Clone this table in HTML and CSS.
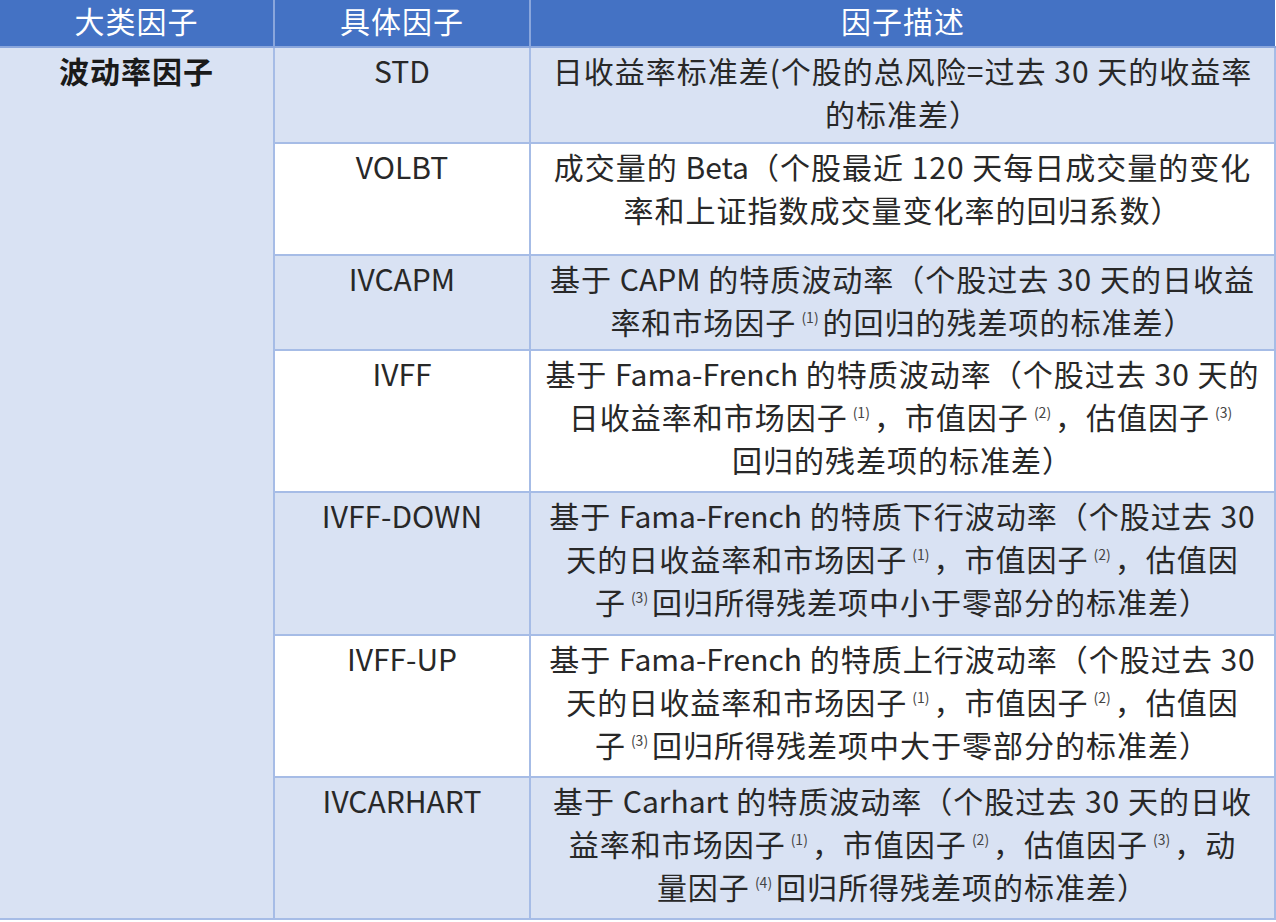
FILE: index.html
```html
<!DOCTYPE html>
<html lang="zh-CN">
<head>
<meta charset="utf-8">
<title>波动率因子</title>
<link rel="stylesheet" href="styles.css">
</head>
<body>
<table class="factors">
  <colgroup>
    <col class="c1">
    <col class="c2">
    <col class="c3">
  </colgroup>
  <thead>
    <tr class="head">
      <th>大类因子</th>
      <th>具体因子</th>
      <th>因子描述</th>
    </tr>
  </thead>
  <tbody>
    <tr class="r1 shade">
      <td class="cat" rowspan="7">波动率因子</td>
      <td class="name">STD</td>
      <td class="desc">日收益率标准差(个股的总风险=过去 30 天的收益率<br>的标准差）</td>
    </tr>
    <tr class="r2 plain">
      <td class="name">VOLBT</td>
      <td class="desc">成交量的 <span class="lat">Beta</span>（个股最近 120 天每日成交量的变化<br>率和上证指数成交量变化率的回归系数）</td>
    </tr>
    <tr class="r3 shade">
      <td class="name">IVCAPM</td>
      <td class="desc">基于 <span class="lat">CAPM</span> 的特质波动率（个股过去 30 天的日收益<br>率和市场因子<sup class="ref">(1)</sup>的回归的残差项的标准差）</td>
    </tr>
    <tr class="r4 plain">
      <td class="name">IVFF</td>
      <td class="desc">基于 <span class="lat">Fama-French</span> 的特质波动率（个股过去 30 天的<br>日收益率和市场因子<sup class="ref">(1)</sup>，市值因子<sup class="ref">(2)</sup>，估值因子<sup class="ref">(3)</sup><br>回归的残差项的标准差）</td>
    </tr>
    <tr class="r5 shade">
      <td class="name">IVFF-DOWN</td>
      <td class="desc">基于 <span class="lat">Fama-French</span> 的特质下行波动率（个股过去 30<br>天的日收益率和市场因子<sup class="ref">(1)</sup>，市值因子<sup class="ref">(2)</sup>，估值因<br>子<sup class="ref">(3)</sup>回归所得残差项中小于零部分的标准差）</td>
    </tr>
    <tr class="r6 plain">
      <td class="name">IVFF-UP</td>
      <td class="desc">基于 <span class="lat">Fama-French</span> 的特质上行波动率（个股过去 30<br>天的日收益率和市场因子<sup class="ref">(1)</sup>，市值因子<sup class="ref">(2)</sup>，估值因<br>子<sup class="ref">(3)</sup>回归所得残差项中大于零部分的标准差）</td>
    </tr>
    <tr class="r7 shade">
      <td class="name">IVCARHART</td>
      <td class="desc">基于 <span class="lat">Carhart</span> 的特质波动率（个股过去 30 天的日收<br>益率和市场因子<sup class="ref">(1)</sup>，市值因子<sup class="ref">(2)</sup>，估值因子<sup class="ref">(3)</sup>，动<br>量因子<sup class="ref">(4)</sup>回归所得残差项的标准差）</td>
    </tr>
  </tbody>
</table>
</body>
</html>
```

FILE: styles.css
```css
html, body {
  margin: 0;
  padding: 0;
  background: #ffffff;
}

.factors {
  border-collapse: collapse;
  table-layout: fixed;
  width: 1275px;
  font-family: "Noto Sans CJK SC", "Noto Sans", sans-serif;
  font-size: 30px;
  letter-spacing: 1px;
  color: #282828;
}

.c1 { width: 274px; }
.c2 { width: 256px; }
.c3 { width: 745px; }

.head th {
  height: 47px;
  padding: 0 0 6px 0;
  box-sizing: border-box;
  background: #4472c4;
  color: #ffffff;
  font-weight: 400;
  line-height: 40px;
  text-align: center;
  border-left: 2px solid #8aa6dc;
  border-bottom: 2px solid #8aa6dc;
}

.head th:first-child {
  border-left: none;
}

.factors td {
  box-sizing: border-box;
  vertical-align: top;
  text-align: center;
  line-height: 43px;
  padding: 1px 4px 0 4px;
  border: 2px solid #a6bce6;
  white-space: nowrap;
}

.factors td.cat {
  background: #d9e2f3;
  font-weight: 700;
  color: #1a1a1a;
  border-left: none;
}

.factors td.name {
  letter-spacing: 0;
}

.lat {
  letter-spacing: 0;
}

.shade td { background: #d9e2f3; }
.plain td { background: #ffffff; }

.r1 td { height: 96px; }
.r2 td { height: 112px; }
.r3 td { height: 95px; }
.r4 td { height: 142px; }
.r5 td { height: 143px; }
.r6 td { height: 142px; }
.r7 td { height: 142px; }

.ref {
  font-size: 14px;
  letter-spacing: 0;
  line-height: 0;
  vertical-align: 11px;
  color: #444444;
  margin: 0 4px 0 5px;
}
```
